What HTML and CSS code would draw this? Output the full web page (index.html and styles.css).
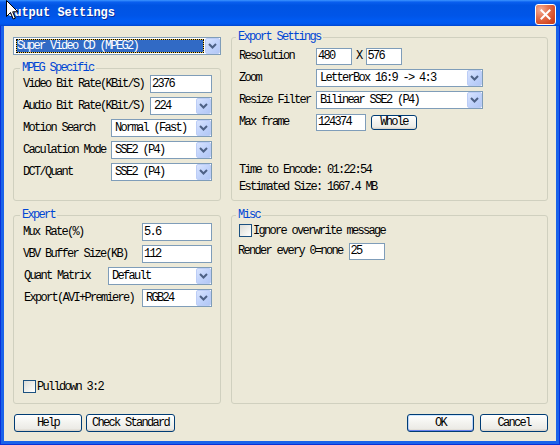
FILE: index.html
```html
<!DOCTYPE html>
<html>
<head>
<meta charset="utf-8">
<title>Output Settings</title>
<link rel="stylesheet" href="styles.css">
</head>
<body>
<div class="window">
  <div class="titlebar">
    <span class="title">Output Settings</span>
    <span class="close"><svg width="11" height="11" viewBox="0 0 11 11"><path d="M1.5 1.5 L9.5 9.5 M9.5 1.5 L1.5 9.5" stroke="#fff" stroke-width="2" stroke-linecap="square"/></svg></span>
  </div>
  <div class="frame">
    <div class="client">
      <div class="groups">
        <div class="left-top">
          <div class="combo">
            <span class="val sel">Super Video CD (MPEG2)</span>
            <span class="arrow"><svg width="9" height="6" viewBox="0 0 9 6"><path d="M1 1 L4.5 4.5 L8 1" fill="none" stroke="#4D6185" stroke-width="2"/></svg></span>
          </div>
          <fieldset class="group mpeg">
            <legend>MPEG Specific</legend>
            <div class="row"><span>Video Bit Rate(KBit/S)</span><input class="edit w62" value="2376" readonly></div>
            <div class="row"><span>Audio Bit Rate(KBit/S)</span><div class="combo w62"><span class="val">224</span><span class="arrow"><svg width="9" height="6" viewBox="0 0 9 6"><path d="M1 1 L4.5 4.5 L8 1" fill="none" stroke="#4D6185" stroke-width="2"/></svg></span></div></div>
            <div class="row"><span>Motion Search</span><div class="combo w101"><span class="val">Normal (Fast)</span><span class="arrow"><svg width="9" height="6" viewBox="0 0 9 6"><path d="M1 1 L4.5 4.5 L8 1" fill="none" stroke="#4D6185" stroke-width="2"/></svg></span></div></div>
            <div class="row"><span>Caculation Mode</span><div class="combo w101"><span class="val">SSE2 (P4)</span><span class="arrow"><svg width="9" height="6" viewBox="0 0 9 6"><path d="M1 1 L4.5 4.5 L8 1" fill="none" stroke="#4D6185" stroke-width="2"/></svg></span></div></div>
            <div class="row"><span>DCT/Quant</span><div class="combo w101"><span class="val">SSE2 (P4)</span><span class="arrow"><svg width="9" height="6" viewBox="0 0 9 6"><path d="M1 1 L4.5 4.5 L8 1" fill="none" stroke="#4D6185" stroke-width="2"/></svg></span></div></div>
          </fieldset>
        </div>

        <fieldset class="group export">
          <legend>Export Settings</legend>
          <div class="erow"><span class="elabel">Resolution</span><input class="edit w36 h17" value="480" readonly><span class="x">X</span><input class="edit w36 h17" value="576" readonly></div>
          <div class="erow"><span class="elabel">Zoom</span><div class="combo w167"><span class="val">LetterBox 16:9 -&gt; 4:3</span><span class="arrow"><svg width="9" height="6" viewBox="0 0 9 6"><path d="M1 1 L4.5 4.5 L8 1" fill="none" stroke="#4D6185" stroke-width="2"/></svg></span></div></div>
          <div class="erow"><span class="elabel">Resize Filter</span><div class="combo w167"><span class="val">Bilinear SSE2 (P4)</span><span class="arrow"><svg width="9" height="6" viewBox="0 0 9 6"><path d="M1 1 L4.5 4.5 L8 1" fill="none" stroke="#4D6185" stroke-width="2"/></svg></span></div></div>
          <div class="erow"><span class="elabel">Max frame</span><input class="edit w50 h17" value="124374" readonly><button class="btn small">Whole</button></div>
          <div class="info">
            <span>Time to Encode: 01:22:54</span>
            <span>Estimated Size: 1667.4 MB</span>
          </div>
        </fieldset>

        <fieldset class="group expert">
          <legend>Expert</legend>
          <div class="row"><span>Mux Rate(%)</span><input class="edit w70" value="5.6" readonly></div>
          <div class="row"><span>VBV Buffer Size(KB)</span><input class="edit w70" value="112" readonly></div>
          <div class="row"><span class="ind">Quant Matrix</span><div class="combo w104"><span class="val">Default</span><span class="arrow"><svg width="9" height="6" viewBox="0 0 9 6"><path d="M1 1 L4.5 4.5 L8 1" fill="none" stroke="#4D6185" stroke-width="2"/></svg></span></div></div>
          <div class="row"><span class="ind">Export(AVI+Premiere)</span><div class="combo w70"><span class="val">RGB24</span><span class="arrow"><svg width="9" height="6" viewBox="0 0 9 6"><path d="M1 1 L4.5 4.5 L8 1" fill="none" stroke="#4D6185" stroke-width="2"/></svg></span></div></div>
          <label class="check bottom"><span class="box"></span><span>Pulldown 3:2</span></label>
        </fieldset>

        <fieldset class="group misc">
          <legend>Misc</legend>
          <label class="check"><span class="box"></span><span>Ignore overwrite message</span></label>
          <div class="mrow"><span>Render every 0=none</span><input class="edit w36 h17" value="25" readonly></div>
        </fieldset>
      </div>

      <div class="buttons">
        <div class="btn-group">
          <button class="btn w68">Help</button>
          <button class="btn w89">Check Standard</button>
        </div>
        <div class="btn-group wide">
          <button class="btn default w67">OK</button>
          <button class="btn w68">Cancel</button>
        </div>
      </div>
    </div>
  </div>
  <svg class="cursor" width="13" height="21" viewBox="0 0 13 21"><path d="M0.5 0.5 L0.5 16.5 L4.5 12.5 L7.2 19 L9.3 18.1 L6.7 11.8 L11.8 11.8 Z" fill="#fff" stroke="#000" stroke-width="1"/></svg>
</div>
</body>
</html>
```

FILE: styles.css
```css
* { box-sizing: border-box; }
html, body { margin: 0; padding: 0; }
body { width: 560px; height: 445px; overflow: hidden; background: #ECE9D8; }

.window {
  position: relative;
  width: 560px;
  height: 445px;
  display: flex;
  flex-direction: column;
  font-family: "Liberation Mono", "DejaVu Sans Mono", monospace;
  font-size: 12px;
  letter-spacing: -1.7px;
  color: #000;
}

.titlebar {
  height: 26px;
  flex: none;
  display: flex;
  align-items: center;
  justify-content: space-between;
  padding: 0 4px 0 7px;
  background: linear-gradient(180deg, #3d95ff 0%, #0a5fef 8%, #0054e3 20%, #0055e8 60%, #005bf3 80%, #0058ee 92%, #0046cf 100%);
}
.title {
  color: #fff;
  font-weight: bold;
  font-size: 12px;
  letter-spacing: 0;
  text-shadow: 1px 1px 0 #0a2e9c;
}
.close {
  width: 21px;
  height: 21px;
  margin-top: 3px;
  border: 1px solid #fff;
  border-radius: 3px;
  display: flex;
  align-items: center;
  justify-content: center;
  background: radial-gradient(circle at 25% 25%, #f4ae97 0%, #e4704c 40%, #d34a25 75%, #c43c1a 100%);
}

.frame {
  flex: 1;
  display: flex;
  border: solid #0831d9;
  border-width: 0 1px 1px;
}
.client {
  flex: 1;
  border: solid #1a63ea;
  border-width: 0 3px 3px;
  background: #ECE9D8;
  padding: 5px 8px 0 9px;
  display: flex;
  flex-direction: column;
}

.groups {
  display: grid;
  grid-template-columns: 208px 317px;
  grid-template-rows: 170px 195px;
  column-gap: 10px;
  row-gap: 8px;
}
.left-top {
  display: flex;
  flex-direction: column;
  padding-top: 6px;
  gap: 7px;
}

.group {
  margin: 0;
  min-width: 0;
  border: 1px solid #D0D0BF;
  border-radius: 3px;
  display: flex;
  flex-direction: column;
}
.group legend {
  color: #0046D5;
  padding: 0 2px;
  margin-left: -3px;
  line-height: 12px;
  height: 12px;
}
.mpeg { flex: 1; padding: 1px 8px 0 9px; gap: 4px; }
.expert { padding: 2px 8px 10px 9px; gap: 4px; }
.export { padding: 4px 8px 7px 7px; gap: 4px; }
.misc { padding: 3px 8px 0 7px; gap: 5px; }

.row {
  display: flex;
  align-items: center;
  justify-content: space-between;
  height: 18px;
  white-space: nowrap;
}
.row .ind { padding-left: 1px; }

.erow {
  display: flex;
  align-items: center;
  height: 18px;
  white-space: nowrap;
}
.elabel { width: 77px; flex: none; }
.x { margin: 0 4px; }

.mrow {
  display: flex;
  align-items: center;
  gap: 6px;
  height: 18px;
  margin-left: -1px;
  white-space: nowrap;
}

.info {
  margin-top: auto;
  display: flex;
  flex-direction: column;
  gap: 5px;
  line-height: 12px;
}

.edit {
  height: 18px;
  border: 1px solid #7F9DB9;
  background: #fff;
  padding: 0 1px;
  margin: 0;
  font: inherit;
  letter-spacing: inherit;
  color: #000;
  outline: none;
}
.h17 { height: 17px; }
.w36 { width: 36px; }
.w50 { width: 50px; }
.w62 { width: 62px; }
.w70 { width: 70px; }
.w101 { width: 101px; }
.w104 { width: 104px; }
.w167 { width: 167px; }

.combo {
  display: flex;
  height: 18px;
  border: 1px solid #7F9DB9;
  background: #fff;
  flex: none;
}
.combo .val {
  flex: 1;
  min-width: 0;
  margin: 1px 1px 1px 2px;
  padding-left: 1px;
  line-height: 14px;
  white-space: nowrap;
  overflow: hidden;
}
.combo .val.sel {
  background: #316AC5;
  color: #fff;
  border: 1px solid #E9C44A;
  outline: 1px dotted #000;
  outline-offset: -1px;
  line-height: 12px;
  padding-left: 0;
}
.combo .arrow {
  width: 15px;
  flex: none;
  display: flex;
  align-items: center;
  justify-content: center;
  border: 1px solid #BCCDF6;
  border-radius: 2px;
  background: linear-gradient(135deg, #D9E4FE 0%, #C1D3FB 50%, #B2C7F5 100%);
}

.check {
  display: flex;
  align-items: center;
  gap: 1px;
  height: 13px;
  white-space: nowrap;
}
.check.bottom { margin-top: auto; }
.box {
  width: 13px;
  height: 13px;
  flex: none;
  border: 1px solid #1C5180;
  background: linear-gradient(135deg, #DCDCD7 0%, #F2F2EE 60%, #FFFFFF 100%);
}

.buttons {
  margin-top: 10px;
  display: flex;
  justify-content: space-between;
  padding-left: 1px;
}
.btn-group { display: flex; gap: 4px; }
.btn-group.wide { gap: 6px; }

.btn {
  height: 18px;
  margin: 0;
  padding: 0;
  border: 1px solid #003C74;
  border-radius: 3px;
  background: linear-gradient(180deg, #FFFFFF 0%, #F4F4F0 45%, #ECEBE6 85%, #D6D0C5 100%);
  font: inherit;
  letter-spacing: inherit;
  color: #000;
  white-space: nowrap;
}
.btn.default {
  box-shadow: inset 0 1px 0 0 #CEE7FF, inset 0 -1px 0 0 #6982EE, inset 1px 0 0 0 #B8D2F8, inset -1px 0 0 0 #B8D2F8;
}
.btn.small {
  width: 46px;
  height: 15px;
  margin-left: 5px;
  line-height: 12px;
}
.w67 { width: 67px; }
.w68 { width: 68px; }
.w89 { width: 89px; }

.cursor {
  position: absolute;
  left: 6px;
  top: 0;
}
```
